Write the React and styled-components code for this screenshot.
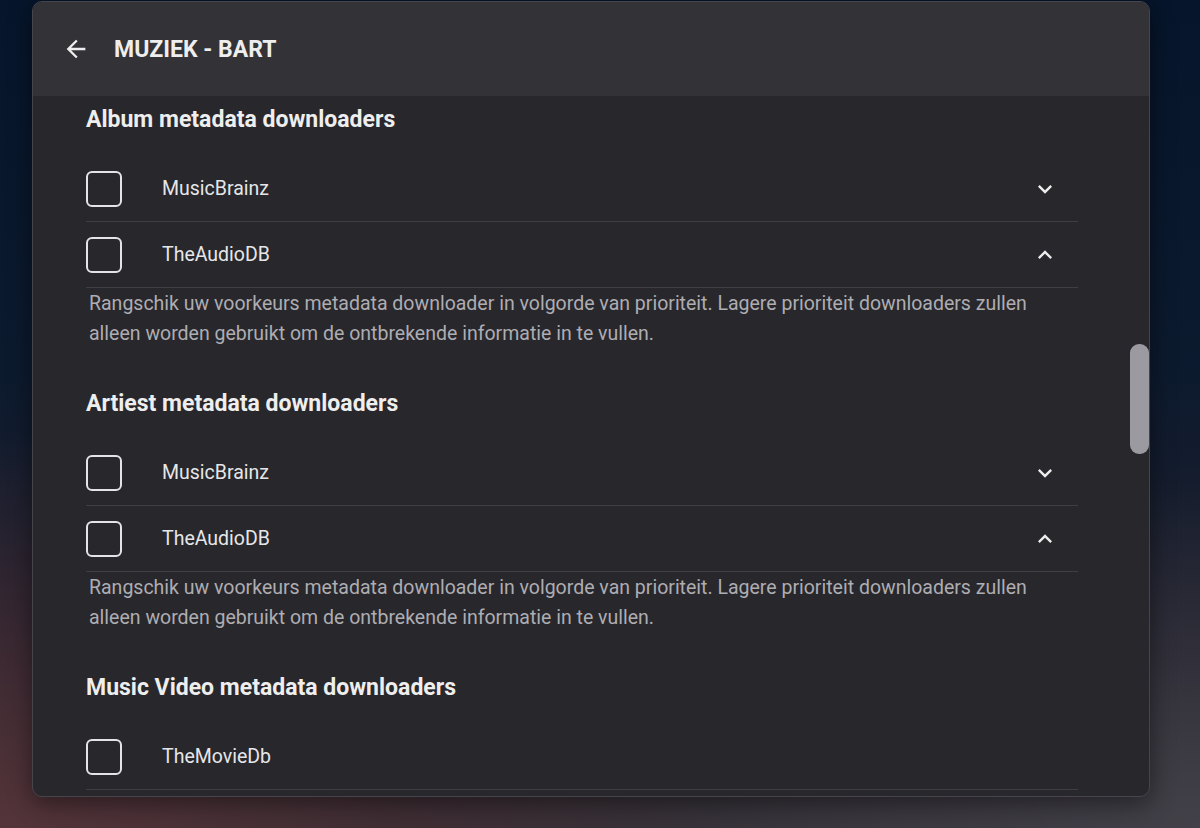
import React from "react";
import styled, { createGlobalStyle } from "styled-components";

const GlobalStyle = createGlobalStyle`
  html, body {
    margin: 0;
    padding: 0;
  }
  body {
    font-family: Roboto, "Noto Sans", sans-serif;
  }
`;

const sections = [
  {
    title: "Album metadata downloaders",
    items: [
      { name: "MusicBrainz", open: false },
      { name: "TheAudioDB", open: true },
    ],
    note: true,
  },
  {
    title: "Artiest metadata downloaders",
    items: [
      { name: "MusicBrainz", open: false },
      { name: "TheAudioDB", open: true },
    ],
    note: true,
  },
  {
    title: "Music Video metadata downloaders",
    items: [{ name: "TheMovieDb", open: null }],
    note: false,
  },
];

function BackIcon() {
  return (
    <svg width="28" height="28" viewBox="0 0 24 24" fill="#eeeeee">
      <path d="M20 11H7.83l5.59-5.59L12 4l-8 8 8 8 1.41-1.41L7.83 13H20v-2z" />
    </svg>
  );
}

function Chevron({ up }) {
  return (
    <ChevronBox $up={up}>
      <svg width="28" height="28" viewBox="0 0 24 24" fill="#ececec">
        <path d="M16.59 8.59L12 13.17 7.41 8.59 6 10l6 6 6-6z" />
      </svg>
    </ChevronBox>
  );
}

function App() {
  return (
    <Page>
      <GlobalStyle />
      <Dialog>
        <Header>
          <BackIcon />
          <Title>MUZIEK - BART</Title>
        </Header>
        <Content>
          {sections.map((section, i) => (
            <Section key={i}>
              <Heading>{section.title}</Heading>
              {section.items.map((item, j) => (
                <Row key={j}>
                  <Checkbox />
                  <RowLabel>{item.name}</RowLabel>
                  {item.open !== null && <Chevron up={item.open} />}
                </Row>
              ))}
              {section.note && (
                <Note>
                  Rangschik uw voorkeurs metadata downloader in volgorde van
                  prioriteit. Lagere prioriteit downloaders zullen alleen worden
                  gebruikt om de ontbrekende informatie in te vullen.
                </Note>
              )}
            </Section>
          ))}
          <ScrollThumb />
        </Content>
      </Dialog>
    </Page>
  );
}

const Page = styled.div`
  width: 1200px;
  height: 828px;
  overflow: hidden;
  box-sizing: border-box;
  padding: 1px 0 0 32px;
  background:
    radial-gradient(ellipse 700px 400px at 0% 100%, rgba(95, 55, 60, 0.75), transparent),
    radial-gradient(ellipse 800px 350px at 100% 100%, rgba(70, 70, 78, 0.8), transparent),
    linear-gradient(180deg, #06152b 0%, #0c1a2e 45%, #221f2b 80%, #302a30 100%);
`;

const Dialog = styled.div`
  width: 1118px;
  height: 796px;
  box-sizing: border-box;
  border: 1px solid #46454b;
  border-radius: 10px;
  overflow: hidden;
  background: #28272c;
  display: flex;
  flex-direction: column;
  box-shadow: 0 6px 24px rgba(0, 0, 0, 0.45);
`;

const Header = styled.div`
  height: 94px;
  flex-shrink: 0;
  background: #333236;
  display: flex;
  align-items: center;
  gap: 24px;
  padding: 0 0 0 29px;
  box-sizing: border-box;
`;

const Title = styled.h1`
  margin: 0;
  font-size: 23px;
  font-weight: 700;
  color: #eeeeee;
`;

const Content = styled.div`
  position: relative;
  flex: 1;
  overflow: hidden;
  padding: 11px 71px 0 53px;
`;

const Section = styled.div`
  margin-bottom: 42px;
`;

const Heading = styled.h2`
  margin: 0 0 23px;
  font-size: 23px;
  line-height: 26px;
  font-weight: 700;
  color: #eeeeee;
`;

const Row = styled.div`
  height: 65px;
  display: flex;
  align-items: center;
  border-bottom: 1px solid #3f3e44;
`;

const Checkbox = styled.div`
  width: 32px;
  height: 32px;
  border: 2px solid #e4e4e6;
  border-radius: 6px;
  flex-shrink: 0;
`;

const RowLabel = styled.span`
  margin-left: 40px;
  flex: 1;
  font-size: 19.5px;
  color: #e6e6e8;
`;

const ChevronBox = styled.span`
  display: flex;
  margin-right: 19px;
  transform: ${(p) => (p.$up ? "rotate(180deg)" : "none")};
`;

const Note = styled.p`
  margin: 0;
  padding: 1px 40px 0 3px;
  font-size: 19.5px;
  line-height: 30px;
  color: #aeadb2;
`;

const ScrollThumb = styled.div`
  position: absolute;
  right: 0;
  top: 248px;
  width: 19px;
  height: 110px;
  border-radius: 9px;
  background: #9b9aa0;
`;

export default App;
